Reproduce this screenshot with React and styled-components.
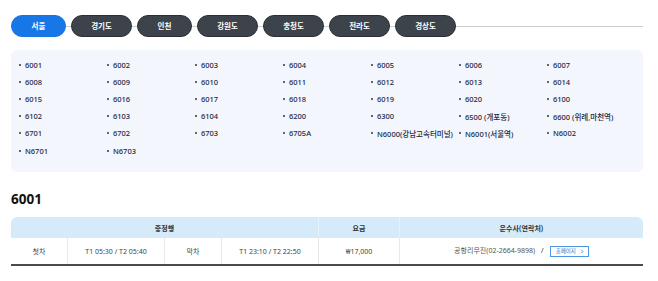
import React from "react";
import styled, { createGlobalStyle } from "styled-components";

const Global = createGlobalStyle`
  html, body { margin: 0; padding: 0; background: #fff; overflow: hidden; }
  body { font-family: "Noto Sans", "Noto Sans CJK KR", sans-serif; color: #222; }
`;

const Page = styled.div`
  width: 632px;
  margin-left: 11px;
  padding-top: 15px;
`;

const TabBar = styled.nav`
  display: flex;
  gap: 5px;
  background: linear-gradient(#cfcfcf, #cfcfcf) center / 100% 1px no-repeat;
`;

const Tab = styled.button`
  height: 22px;
  width: ${(p) => (p.$wide ? 61 : 55)}px;
  padding: 0;
  border-radius: 11px;
  border: 1px solid ${(p) => (p.$active ? "#1a73e0" : "#2a2f35")};
  background: ${(p) => (p.$active ? "#1877e6" : "#3c434b")};
  color: #fff;
  font-family: "Noto Sans CJK KR", sans-serif;
  font-weight: 700;
  font-size: 7.5px;
  line-height: 1;
  cursor: pointer;
`;

const Panel = styled.div`
  margin-top: 13px;
  background: #f3f6fc;
  border-radius: 6px;
  padding: 6px 8px 12px;
  display: grid;
  grid-template-columns: repeat(7, 88px);
  grid-auto-rows: 17.2px;
  height: 122px;
  box-sizing: border-box;
`;

const Item = styled.div`
  display: flex;
  align-items: center;
  gap: 4px;
  font-size: 7.5px;
  font-weight: 500;
  color: #1a2847;
  white-space: nowrap;
  &::before {
    content: "";
    width: 2px;
    height: 2px;
    border-radius: 50%;
    background: #333;
    flex: none;
  }
`;

const Title = styled.h2`
  margin: 19px 0 0;
  font-size: 13.5px;
  font-weight: 700;
  line-height: 16px;
  color: #111;
`;

const Table = styled.table`
  margin-top: 10px;
  width: 632px;
  border-collapse: separate;
  border-spacing: 0;
  table-layout: fixed;
  border-bottom: 2px solid #4a4a4a;
  font-size: 7px;
`;

const Th = styled.th`
  height: 21px;
  padding: 0;
  background: #d5ebf9;
  font-family: "Noto Sans CJK KR", sans-serif;
  font-weight: 700;
  color: #333;
  border-left: ${(p) => (p.$first ? "none" : "1px solid #e6f3fc")};
  &:first-child { border-top-left-radius: 6px; }
  &:last-child { border-top-right-radius: 6px; }
`;

const Td = styled.td`
  height: 26px;
  padding: 0;
  text-align: center;
  color: #444;
  border-left: ${(p) => (p.$first ? "none" : "1px solid #e8e8e8")};
  white-space: nowrap;
`;

const Company = styled.span`
  color: #555;
  font-family: "Noto Sans", "Noto Sans CJK KR", sans-serif;
`;

const Slash = styled.span`
  margin: 0 6px 0 6px;
  color: #333;
`;

const LinkButton = styled.a`
  display: inline-flex;
  align-items: center;
  gap: 4px;
  height: 11px;
  padding: 0 4px 0 5px;
  border: 1px solid #4f95e3;
  color: #2a6fca;
  font-size: 5.5px;
  vertical-align: middle;
  text-decoration: none;
  font-family: "Noto Sans CJK KR", sans-serif;
  box-sizing: border-box;
`;

const tabs = ["서울", "경기도", "인천", "강원도", "충청도", "전라도", "경상도"];
const routes = [
  "6001", "6002", "6003", "6004", "6005", "6006", "6007",
  "6008", "6009", "6010", "6011", "6012", "6013", "6014",
  "6015", "6016", "6017", "6018", "6019", "6020", "6100",
  "6102", "6103", "6104", "6200", "6300", "6500 (개포동)", "6600 (위례,마천역)",
  "6701", "6702", "6703", "6705A", "N6000(강남고속터미널)", "N6001(서울역)", "N6002",
  "N6701", "N6703",
];

export default function App() {
  return (
    <>
      <Global />
      <Page>
        <TabBar>
          {tabs.map((t, i) => (
            <Tab key={t} $active={i === 0} $wide={t.length > 2}>
              {t}
            </Tab>
          ))}
        </TabBar>
        <Panel>
          {routes.map((r) => (
            <Item key={r}>{r}</Item>
          ))}
        </Panel>
        <Title>6001</Title>
        <Table>
          <colgroup>
            <col style={{ width: 56 }} />
            <col style={{ width: 97 }} />
            <col style={{ width: 57 }} />
            <col style={{ width: 97 }} />
            <col style={{ width: 81 }} />
            <col style={{ width: 244 }} />
          </colgroup>
          <thead>
            <tr>
              <Th colSpan={4} $first>중정행</Th>
              <Th>요금</Th>
              <Th>운수사(연락처)</Th>
            </tr>
          </thead>
          <tbody>
            <tr>
              <Td $first>첫차</Td>
              <Td>T1 05:30 / T2 05:40</Td>
              <Td>막차</Td>
              <Td>T1 23:10 / T2 22:50</Td>
              <Td>₩17,000</Td>
              <Td>
                <Company>공항리무진(02-2664-9898)</Company>
                <Slash>/</Slash>
                <LinkButton href="#">
                  홈페이지
                  <svg width="4" height="5" viewBox="0 0 4 6">
                    <path d="M1 0.8 L3 3 L1 5.2" fill="none" stroke="#2a6fca" strokeWidth="0.9" />
                  </svg>
                </LinkButton>
              </Td>
            </tr>
          </tbody>
        </Table>
      </Page>
    </>
  );
}
